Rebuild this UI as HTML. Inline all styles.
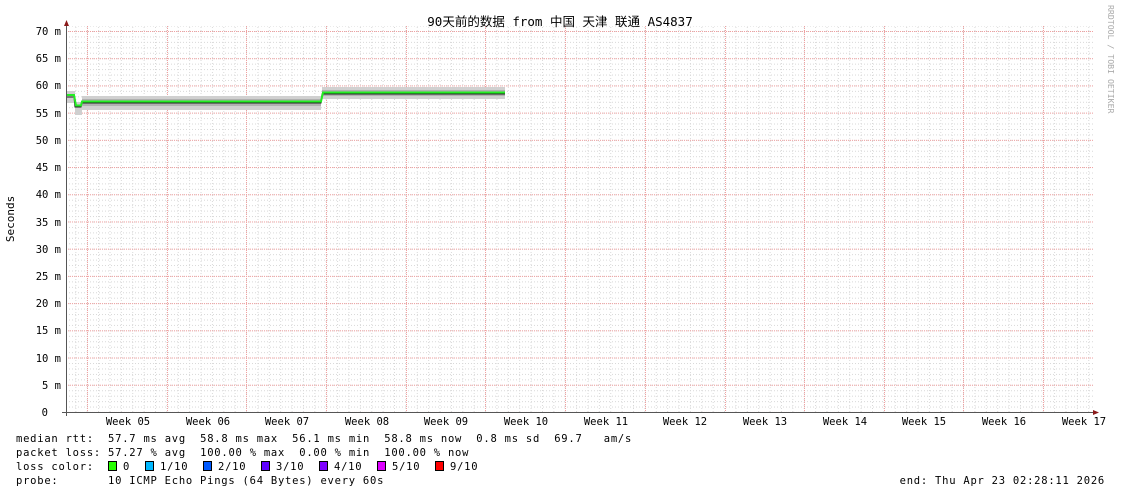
<!DOCTYPE html>
<html><head><meta charset="utf-8"><style>
body{margin:0;background:#fff;width:1121px;height:494px;overflow:hidden}
svg text{font-family:"DejaVu Sans Mono","Liberation Mono","Noto Sans CJK SC",monospace;font-size:10.5px;fill:#000}
svg text.lg{letter-spacing:0.76px}
</style></head><body>
<svg width="1121" height="494" xmlns="http://www.w3.org/2000/svg">
<defs>
<pattern id="mv" x="7.05" y="0" width="11.381" height="500" patternUnits="userSpaceOnUse">
<line x1="0.5" y1="0" x2="0.5" y2="500" stroke="#d8d8d8" stroke-dasharray="1,2"/>
</pattern>
<pattern id="mh" x="0" y="31" width="2000" height="5.443" patternUnits="userSpaceOnUse">
<line x1="0" y1="0.5" x2="2000" y2="0.5" stroke="#d8d8d8" stroke-dasharray="1,2"/>
</pattern>
<pattern id="Mh" x="0" y="31" width="2000" height="27.21" patternUnits="userSpaceOnUse">
<line x1="0" y1="0.5" x2="2000" y2="0.5" stroke="#f0a0a0" stroke-dasharray="1,1"/>
</pattern>
</defs>
<rect x="66" y="26" width="1028" height="386" fill="url(#mh)"/>
<rect x="66" y="26" width="1028" height="386" fill="url(#mv)"/>
<rect x="66" y="26" width="1028" height="386" fill="url(#Mh)"/>
<g stroke="#f0a0a0" stroke-dasharray="1,1" stroke-width="1">
<line x1="87.5" y1="26" x2="87.5" y2="412"/><line x1="167.5" y1="26" x2="167.5" y2="412"/>
<line x1="246.5" y1="26" x2="246.5" y2="412"/><line x1="326.5" y1="26" x2="326.5" y2="412"/>
<line x1="406.5" y1="26" x2="406.5" y2="412"/><line x1="485.5" y1="26" x2="485.5" y2="412"/>
<line x1="565.5" y1="26" x2="565.5" y2="412"/><line x1="645.5" y1="26" x2="645.5" y2="412"/>
<line x1="725.5" y1="26" x2="725.5" y2="412"/><line x1="804.5" y1="26" x2="804.5" y2="412"/>
<line x1="884.5" y1="26" x2="884.5" y2="412"/><line x1="963.5" y1="26" x2="963.5" y2="412"/>
<line x1="1043.5" y1="26" x2="1043.5" y2="412"/>
</g>
<!-- smoke -->
<rect x="67" y="91" width="8" height="12" fill="#cfcfcf"/>
<rect x="75" y="102" width="7" height="13" fill="#cfcfcf"/>
<rect x="82" y="96" width="239" height="14" fill="#d0d0d0"/>
<rect x="82" y="99" width="239" height="7" fill="#b0b0b0"/>
<rect x="322" y="87" width="183" height="12" fill="#d0d0d0"/>
<rect x="322" y="90" width="183" height="6" fill="#b0b0b0"/>
<!-- median -->
<polyline points="67,97 74,97 75,107 81,107 82,103 321,103 322,94 505,94" fill="none" stroke="#222" stroke-width="1"/>
<polyline points="67,95 74,95 76,105.5 81,105.5 82,101.5 321,101.5 323,92.5 505,92.5" fill="none" stroke="#22ee22" stroke-width="2"/>
<!-- axes -->
<line x1="66.5" y1="24" x2="66.5" y2="416" stroke="#555"/>
<line x1="62" y1="412.5" x2="1097" y2="412.5" stroke="#555"/>
<polygon points="64,26 69,26 66.5,20" fill="#8b1a1a"/>
<polygon points="1093,410 1093,415 1099,412.5" fill="#8b1a1a"/>
<g text-anchor="end">
<text x="61" y="35">70 m</text><text x="61" y="62">65 m</text><text x="61" y="89">60 m</text>
<text x="61" y="117">55 m</text><text x="61" y="144">50 m</text><text x="61" y="171">45 m</text>
<text x="61" y="198">40 m</text><text x="61" y="226">35 m</text><text x="61" y="253">30 m</text>
<text x="61" y="280">25 m</text><text x="61" y="307">20 m</text><text x="61" y="334">15 m</text>
<text x="61" y="362">10 m</text><text x="61" y="389">5 m</text><text x="48" y="416">0</text>
</g>
<g text-anchor="middle">
<text x="128" y="425">Week 05</text><text x="208" y="425">Week 06</text><text x="287" y="425">Week 07</text>
<text x="367" y="425">Week 08</text><text x="446" y="425">Week 09</text><text x="526" y="425">Week 10</text>
<text x="606" y="425">Week 11</text><text x="685" y="425">Week 12</text><text x="765" y="425">Week 13</text>
<text x="845" y="425">Week 14</text><text x="924" y="425">Week 15</text><text x="1004" y="425">Week 16</text>
<text x="1084" y="425">Week 17</text>
</g>
<text x="560" y="26" text-anchor="middle" style="font-size:12.5px">90天前的数据 from 中国 天津 联通 AS4837</text>
<text transform="translate(14,219) rotate(-90)" text-anchor="middle" style="font-size:11px">Seconds</text>
<text transform="translate(1108,5) rotate(90)" style="font-size:8.2px;fill:#aaa">RRDTOOL / TOBI OETIKER</text>
<text class="lg" x="16" y="442" xml:space="preserve">median rtt:  57.7 ms avg  58.8 ms max  56.1 ms min  58.8 ms now  0.8 ms sd  69.7   am/s</text>
<text class="lg" x="16" y="456" xml:space="preserve">packet loss: 57.27 % avg  100.00 % max  0.00 % min  100.00 % now</text>
<text class="lg" x="16" y="470">loss color:</text>
<text class="lg" x="123" y="470">0</text><text class="lg" x="160" y="470">1/10</text><text class="lg" x="218" y="470">2/10</text>
<text class="lg" x="276" y="470">3/10</text><text class="lg" x="334" y="470">4/10</text><text class="lg" x="392" y="470">5/10</text><text class="lg" x="450" y="470">9/10</text>
<text class="lg" x="16" y="484">probe:</text>
<text class="lg" x="108" y="484">10 ICMP Echo Pings (64 Bytes) every 60s</text>
<text class="lg" x="1105" y="484" text-anchor="end">end: Thu Apr 23 02:28:11 2026</text>
<g stroke="#000" stroke-width="1">
<rect x="108.5" y="461.5" width="8" height="9" fill="#26ff00"/>
<rect x="145.5" y="461.5" width="8" height="9" fill="#00b8ff"/>
<rect x="203.5" y="461.5" width="8" height="9" fill="#0059ff"/>
<rect x="261.5" y="461.5" width="8" height="9" fill="#5e00ff"/>
<rect x="319.5" y="461.5" width="8" height="9" fill="#7e00ff"/>
<rect x="377.5" y="461.5" width="8" height="9" fill="#dd00ff"/>
<rect x="435.5" y="461.5" width="8" height="9" fill="#ff0000"/>
</g>
</svg>
</body></html>
